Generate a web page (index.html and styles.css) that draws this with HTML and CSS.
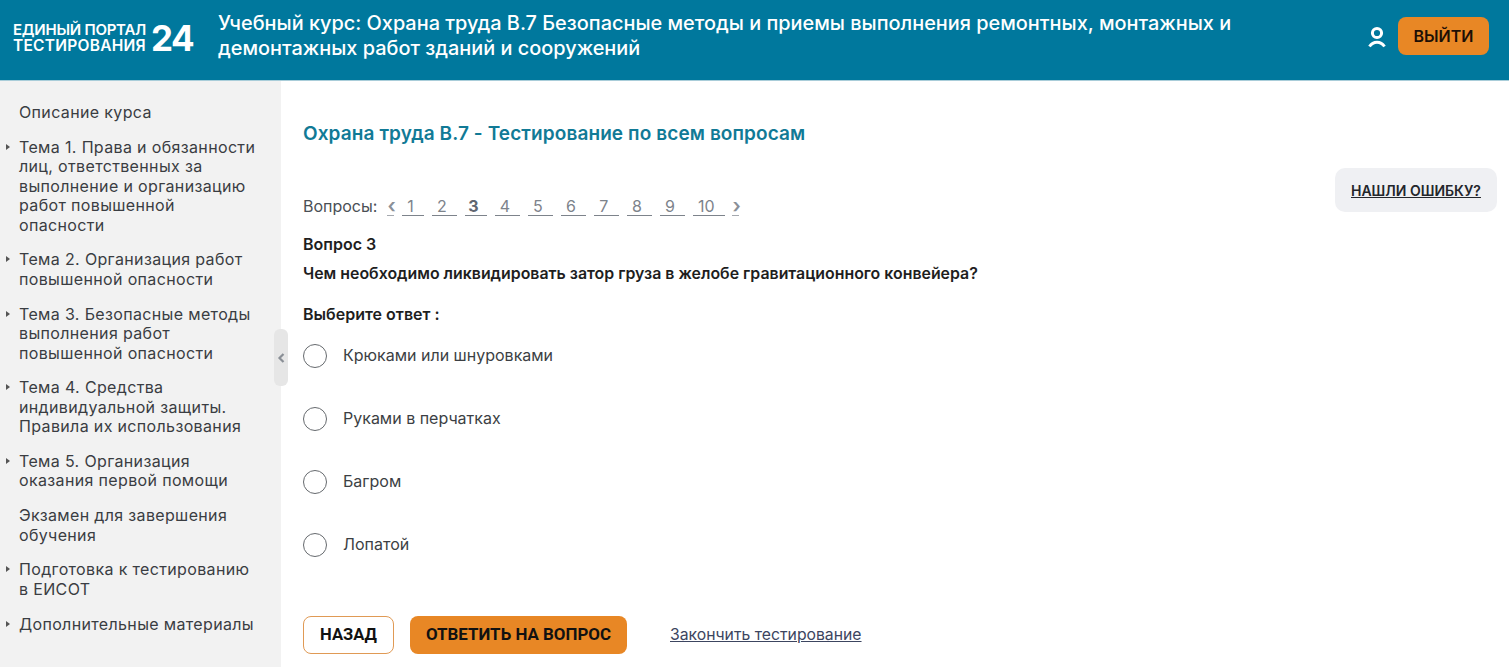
FILE: index.html
```html
<!DOCTYPE html>
<html lang="ru">
<head>
    <meta charset="UTF-8">
    <meta name="viewport" content="width=device-width, initial-scale=1.0">
    <title>Охрана труда В.7</title>
    <link rel="stylesheet" href="styles.css">
</head>
<body>
    <header class="header">
        <div class="logo">
            <div class="logo-text">
                <span class="logo-line1">ЕДИНЫЙ ПОРТАЛ</span>
                <span class="logo-line2">ТЕСТИРОВАНИЯ</span>
            </div>
            <div class="logo-num">24</div>
        </div>
        <h1 class="course-title">Учебный курс: Охрана труда В.7 Безопасные методы и приемы выполнения ремонтных, монтажных и демонтажных работ зданий и сооружений</h1>
        <div class="user-box">
            <svg class="user-icon" width="18" height="22" viewBox="0 0 18 22" fill="none" stroke="#fff" stroke-width="3">
                <circle cx="9" cy="7" r="4.600"/>
                <path d="M1.500 20.500C3.500 17.500 6 16.300 9 16.300s5.500 1.200 7.500 4.200"/>
            </svg>
            <a class="btn btn-orange btn-exit">ВЫЙТИ</a>
        </div>
    </header>

    <div class="page">
        <aside class="sidebar">
            <ul class="menu">
                <li class="no-arrow">Описание курса</li>
                <li>Тема 1. Права и обязанности лиц, ответственных за выполнение и организацию работ повышенной опасности</li>
                <li>Тема 2. Организация работ повышенной опасности</li>
                <li>Тема 3. Безопасные методы выполнения работ повышенной опасности</li>
                <li>Тема 4. Средства индивидуальной защиты. Правила их использования</li>
                <li>Тема 5. Организация оказания первой помощи</li>
                <li class="no-arrow">Экзамен для завершения обучения</li>
                <li>Подготовка к тестированию в ЕИСОТ</li>
                <li>Дополнительные материалы</li>
            </ul>
            <div class="collapse">
                <svg width="8" height="10" viewBox="0 0 8 10" fill="none" stroke="#8a8f96" stroke-width="2.200">
                    <path d="M6.500 1 2.500 5 6.500 9"/>
                </svg>
            </div>
        </aside>

        <main class="content">
            <h2 class="test-title">Охрана труда В.7 - Тестирование по всем вопросам</h2>

            <div class="pager-row">
                <div class="pager">
                    <span class="pager-label">Вопросы:</span>
                    <a class="pager-arrow prev">‹</a>
                    <a class="pager-num narrow">1</a>
                    <a class="pager-num">2</a>
                    <a class="pager-num narrow current">3</a>
                    <a class="pager-num">4</a>
                    <a class="pager-num">5</a>
                    <a class="pager-num">6</a>
                    <a class="pager-num">7</a>
                    <a class="pager-num">8</a>
                    <a class="pager-num">9</a>
                    <a class="pager-num wide">10</a>
                    <a class="pager-arrow">›</a>
                </div>
                <a class="report-btn"><span>НАШЛИ ОШИБКУ?</span></a>
            </div>

            <div class="question-num">Вопрос 3</div>
            <div class="question-text">Чем необходимо ликвидировать затор груза в желобе гравитационного конвейера?</div>
            <div class="answer-label">Выберите ответ :</div>

            <div class="answers">
                <label class="answer"><span class="radio"></span><span class="answer-text">Крюками или шнуровками</span></label>
                <label class="answer"><span class="radio"></span><span class="answer-text">Руками в перчатках</span></label>
                <label class="answer"><span class="radio"></span><span class="answer-text">Багром</span></label>
                <label class="answer"><span class="radio"></span><span class="answer-text">Лопатой</span></label>
            </div>

            <div class="actions">
                <a class="btn btn-outline">НАЗАД</a>
                <a class="btn btn-orange btn-answer">ОТВЕТИТЬ НА ВОПРОС</a>
                <a class="finish-link">Закончить тестирование</a>
            </div>
        </main>
    </div>
</body>
</html>
```

FILE: styles.css
```css
* {
    box-sizing: border-box;
}

html, body {
    height: 100%;
}

body {
    margin: 0;
    font-family: Inter, "Noto Sans", sans-serif;
    color: #212529;
    background: #fff;
    overflow: hidden;
}

/* header */
.header {
    height: 81px;
    display: flex;
    align-items: center;
    padding: 0 20px 8px 13px;
    background: #00789d;
    border-bottom: 1px solid #a9cdd9;
    color: #fff;
}

.logo {
    display: flex;
    align-items: center;
    width: 205px;
    margin-top: 4px;
    flex-shrink: 0;
}

.logo-text {
    display: flex;
    flex-direction: column;
    font-size: 15px;
    line-height: 16px;
    font-weight: 600;
    white-space: nowrap;
}

.logo-line1 {
    letter-spacing: -0.25px;
}

.logo-line2 {
    font-size: 15.5px;
    letter-spacing: 0.25px;
}

.logo-num {
    margin-left: 5px;
    font-size: 35px;
    line-height: 36px;
    font-weight: 700;
    letter-spacing: -1.5px;
}

.course-title {
    flex: 1;
    margin: 0;
    max-width: 1040px;
    font-size: 19.9px;
    line-height: 25px;
    font-weight: 500;
}

.user-box {
    margin-left: auto;
    display: flex;
    align-items: center;
    gap: 12px;
}

.user-icon {
    margin-top: 1px;
}

.btn {
    display: inline-flex;
    align-items: center;
    justify-content: center;
    padding-bottom: 2px;
    border-radius: 8px;
    font-family: Roboto, sans-serif;
    font-size: 16.6px;
    font-weight: 700;
    color: #111;
}

.btn-orange {
    background: #e88725;
}

.btn-exit {
    width: 91px;
    height: 38px;
    padding-bottom: 0;
    font-family: Inter, sans-serif;
    font-size: 16px;
    font-weight: 600;
    color: #1d0f05;
}

/* sidebar */
.page {
    display: flex;
    height: 586px;
}

.sidebar {
    position: relative;
    width: 281px;
    flex-shrink: 0;
    padding: 22px 24px 0 19px;
    background: #f2f2f2;
}

.menu {
    list-style: none;
    margin: 0;
    padding: 0;
    display: flex;
    flex-direction: column;
    gap: 15.2px;
    font-size: 16px;
    line-height: 19.5px;
    letter-spacing: 0.35px;
    color: #3a3d42;
}

.menu li {
    position: relative;
}

.menu li::before {
    content: "";
    position: absolute;
    left: -13px;
    top: 6px;
    border-left: 4px solid #555;
    border-top: 3px solid transparent;
    border-bottom: 3px solid transparent;
}

.menu li.no-arrow::before {
    display: none;
}

.collapse {
    position: absolute;
    top: 248px;
    right: -7px;
    width: 14px;
    height: 57px;
    display: flex;
    align-items: center;
    justify-content: center;
    border-radius: 6px;
    background: #e6e6e6;
}

/* main */
.content {
    flex: 1;
    padding: 41px 12px 0 22px;
}

.test-title {
    margin: 0;
    font-size: 19px;
    line-height: 24px;
    font-weight: 600;
    letter-spacing: 0.1px;
    color: #117a96;
}

.pager-row {
    display: flex;
    justify-content: space-between;
    align-items: flex-start;
    margin-top: 22px;
    height: 44px;
}

.pager {
    display: flex;
    align-items: center;
    margin-top: 26px;
    font-size: 16px;
    line-height: 24px;
    color: #4a4f55;
}

.pager-label {
    margin-right: 11px;
}

.pager-arrow {
    width: 7px;
    margin-left: -1px;
    font-size: 20px;
    font-weight: 600;
    line-height: 18px;
    text-align: center;
    color: #8a9098;
    border-bottom: 1px solid #a5a9af;
}

.pager-arrow.prev {
    margin-right: 8px;
}

.pager-num {
    width: 25px;
    margin-right: 8px;
    padding-right: 6px;
    text-align: center;
    color: #7d838b;
    border-bottom: 1px solid #7d838b;
    line-height: 18px;
}

.pager-num.narrow {
    width: 22px;
}

.pager-num.wide {
    width: 32px;
}

.pager-num.current {
    font-weight: 700;
    color: #5f6670;
}

.report-btn {
    display: flex;
    align-items: center;
    justify-content: center;
    width: 162px;
    height: 44px;
    border-radius: 10px;
    background: #eff0f3;
    font-size: 14px;
    font-weight: 600;
    color: #23262b;
    text-decoration: underline;
}

.question-num {
    margin-top: 20px;
    font-size: 16px;
    line-height: 24px;
    font-weight: 600;
    color: #1e1e1e;
}

.question-text {
    margin-top: 6px;
    font-size: 15.9px;
    line-height: 24px;
    font-weight: 600;
    color: #1e1e1e;
}

.answer-label {
    margin-top: 16px;
    font-size: 16px;
    line-height: 24px;
    font-weight: 600;
    color: #1e1e1e;
}

.answers {
    display: flex;
    flex-direction: column;
    gap: 39px;
    margin-top: 18px;
}

.answer {
    display: flex;
    align-items: center;
    height: 24px;
    font-size: 16px;
    color: #3c3f44;
}

.answer-text {
    padding-bottom: 2px;
}

.radio {
    width: 24px;
    height: 24px;
    margin-right: 16px;
    border: 1px solid #666a6e;
    border-radius: 50%;
    background: #fff;
}

.actions {
    display: flex;
    align-items: center;
    margin-top: 59px;
}

.btn-outline {
    width: 91px;
    height: 38px;
    border: 1px solid #e09a55;
    background: #fff;
}

.btn-answer {
    width: 217px;
    height: 38px;
    margin-left: 16px;
    font-size: 16.9px;
}

.finish-link {
    margin-left: 43px;
    padding-bottom: 2px;
    font-size: 15.75px;
    color: #3c4560;
    text-decoration: underline;
}
```
